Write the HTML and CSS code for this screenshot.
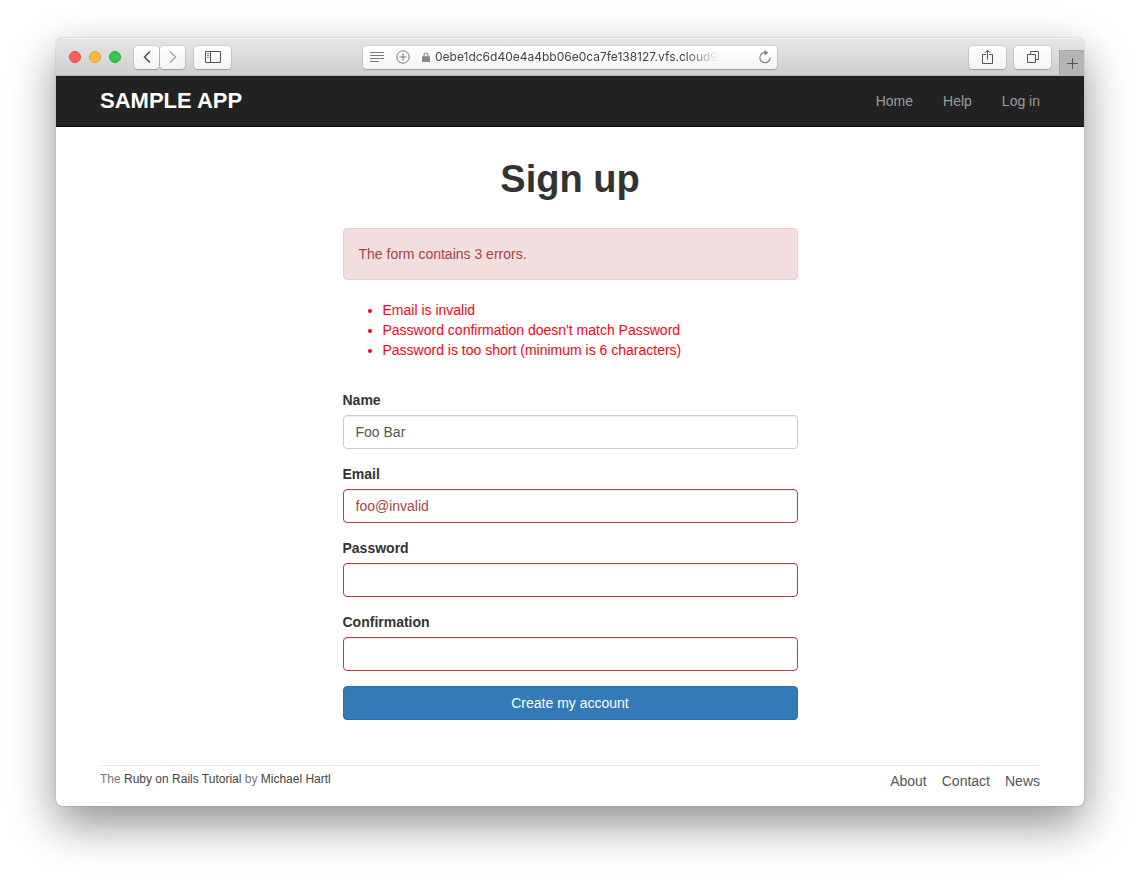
FILE: index.html
```html
<!DOCTYPE html>
<html lang="en">
<head>
<meta charset="utf-8">
<meta name="viewport" content="width=device-width, initial-scale=1">
<title>Sign up | Sample App</title>
<link rel="stylesheet" href="styles.css">
</head>
<body>
<div class="window">
  <div class="toolbar">
    <div class="toolbar-left">
      <div class="lights">
        <button class="light light-close" type="button" aria-label="Close"></button>
        <button class="light light-min" type="button" aria-label="Minimize"></button>
        <button class="light light-zoom" type="button" aria-label="Zoom"></button>
      </div>
      <div class="history">
        <button class="tool tool-small" type="button" aria-label="Back">
          <svg width="10" height="14" viewBox="0 0 10 14"><path d="M8 1.5 2.5 7 8 12.5" fill="none" stroke="#4a4a4a" stroke-width="1.5"/></svg>
        </button>
        <button class="tool tool-small" type="button" aria-label="Forward">
          <svg width="10" height="14" viewBox="0 0 10 14"><path d="M2 1.5 7.5 7 2 12.5" fill="none" stroke="#a9a9a9" stroke-width="1.5"/></svg>
        </button>
      </div>
      <button class="tool" type="button" aria-label="Show sidebar">
        <svg width="16" height="12" viewBox="0 0 16 12"><path d="M.5.5h15v11H.5zM5.500.5v11" fill="none" stroke="#555"/><path d="M2 2.500h2M2 4.500h2M2 6.500h2" stroke="#888"/></svg>
      </button>
    </div>
    <div class="address">
      <svg width="14" height="10" viewBox="0 0 14 10"><path d="M0 .5h14M0 3.500h14M0 6.500h14M0 9.500h9" stroke="#7a7a7a"/></svg>
      <svg width="14" height="14" viewBox="0 0 14 14"><g fill="none" stroke="#777"><circle cx="7" cy="7" r="6.200"/><path d="M7 3.500v7M3.500 7h7"/></g></svg>
      <div class="location">
        <svg width="8" height="10" viewBox="0 0 8 10"><path d="M2 5V3a2 2 0 0 1 4 0v2" fill="none" stroke="#888" stroke-width="1.200"/><rect y="4.300" width="8" height="5.700" rx=".8" fill="#888"/></svg>
        <span class="url">0ebe1dc6d40e4a4bb06e0ca7fe138127.vfs.cloud9</span>
      </div>
      <button class="reload" type="button" aria-label="Reload">
        <svg width="14" height="14" viewBox="0 0 14 14"><path d="M8 2.600A5.100 5.100 0 1 0 12.100 7.500" fill="none" stroke="#777" stroke-width="1.100"/><path d="M6.500 0 10.200 2.800 6.500 5.400z" fill="#777"/></svg>
      </button>
    </div>
    <div class="toolbar-right">
      <button class="tool" type="button" aria-label="Share">
        <svg width="12" height="16" viewBox="0 0 12 16"><path d="M4 5.500H.5v9h10v-9H7M5.500 10.500V1.200M2.800 3.900l2.700-2.700 2.700 2.700" fill="none" stroke="#555"/></svg>
      </button>
      <button class="tool" type="button" aria-label="Show all tabs">
        <svg width="12" height="12" viewBox="0 0 12 12"><path d="M.5 3.500h8v8h-8zM3.500 3.500v-3h8v8h-3" fill="none" stroke="#555"/></svg>
      </button>
      <button class="new-tab" type="button" aria-label="New tab">
        <svg width="11" height="11" viewBox="0 0 11 11"><path d="M5.500 0v11M0 5.500h11" stroke="#555"/></svg>
      </button>
    </div>
  </div>

  <header class="navbar">
    <div class="container navbar-row">
      <a class="logo" href="#">SAMPLE APP</a>
      <nav class="nav-links">
        <a href="#">Home</a>
        <a href="#">Help</a>
        <a href="#">Log in</a>
      </nav>
    </div>
  </header>

  <main class="container">
    <h1 class="title">Sign up</h1>
    <form class="signup">
      <div class="alert" role="alert">The form contains 3 errors.</div>
      <ul class="errors">
        <li>Email is invalid</li>
        <li>Password confirmation doesn't match Password</li>
        <li>Password is too short (minimum is 6 characters)</li>
      </ul>
      <div class="field">
        <label for="name">Name</label>
        <input id="name" type="text" value="Foo Bar">
      </div>
      <div class="field field-error">
        <label for="email">Email</label>
        <input id="email" type="email" value="foo@invalid">
      </div>
      <div class="field field-error">
        <label for="password">Password</label>
        <input id="password" type="password">
      </div>
      <div class="field field-error">
        <label for="confirmation">Confirmation</label>
        <input id="confirmation" type="password">
      </div>
      <button class="submit" type="submit">Create my account</button>
    </form>
    <footer class="footer">
      <small>The <a href="#">Ruby on Rails Tutorial</a> by <a href="#">Michael Hartl</a></small>
      <nav class="footer-links">
        <a href="#">About</a>
        <a href="#">Contact</a>
        <a href="#">News</a>
      </nav>
    </footer>
  </main>
</div>
</body>
</html>
```
FILE: styles.css
```css
* {
  box-sizing: border-box;
}

body {
  margin: 0;
  padding: 38px 56px 72px;
  background: #fff;
  color: #333;
  font: 14px/20px "Liberation Sans", Arial, sans-serif;
}

a {
  text-decoration: none;
}

button,
input {
  font: inherit;
}

svg {
  display: block;
  flex: none;
}

.window {
  overflow: hidden;
  border-radius: 6px;
  background: #fff;
  box-shadow: 0 0 1px rgba(0, 0, 0, 0.6), 0 18px 46px rgba(0, 0, 0, 0.44);
}

.toolbar {
  display: grid;
  grid-template-columns: 1fr minmax(0, 414px) 1fr;
  align-items: center;
  height: 38px;
  border-top: 1px solid #f2f2f2;
  border-bottom: 1px solid #b4b4b4;
  background: linear-gradient(#e6e6e6, #cfcfcf);
}

.toolbar-left,
.toolbar-right,
.lights,
.history,
.location {
  display: flex;
  align-items: center;
}

.toolbar-left {
  gap: 9px;
  padding-left: 13px;
}

.lights {
  gap: 8px;
  margin-right: 4px;
}

.light {
  width: 12px;
  height: 12px;
  padding: 0;
  border: 1px solid;
  border-radius: 50%;
}

.light-close {
  border-color: #e2453f;
  background: #fc605c;
}

.light-min {
  border-color: #e0a033;
  background: #fdbc40;
}

.light-zoom {
  border-color: #27a833;
  background: #34c84a;
}

.history {
  gap: 1px;
}

.tool {
  display: flex;
  align-items: center;
  justify-content: center;
  width: 37px;
  height: 23px;
  padding: 0;
  border: 0;
  border-radius: 4px;
  background: linear-gradient(#fff, #f3f3f3);
  box-shadow: 0 0 0 1px rgba(0, 0, 0, 0.08), 0 1px 1px rgba(0, 0, 0, 0.2);
}

.tool-small {
  width: 25px;
}

.address {
  display: flex;
  align-items: center;
  gap: 12px;
  height: 23px;
  padding: 0 5px 0 7px;
  border-radius: 4px;
  background: linear-gradient(#fff, #f5f5f5);
  box-shadow: 0 0 0 1px rgba(0, 0, 0, 0.08), 0 1px 1px rgba(0, 0, 0, 0.2);
}

.location {
  flex: 1;
  gap: 5px;
  min-width: 0;
}

.url {
  flex: 0 1 282px;
  overflow: hidden;
  color: #444;
  font: 12px/16px Inter, sans-serif;
  white-space: nowrap;
  -webkit-mask-image: linear-gradient(to right, #000 250px, transparent 284px);
  mask-image: linear-gradient(to right, #000 250px, transparent 284px);
}

.reload {
  padding: 0;
  border: 0;
  background: none;
}

.toolbar-right {
  align-self: stretch;
  justify-content: flex-end;
  gap: 8px;
}

.new-tab {
  display: flex;
  align-items: center;
  justify-content: center;
  align-self: flex-end;
  width: 25px;
  height: 25px;
  padding: 0;
  border: 1px solid #a6a6a6;
  border-width: 1px 0 0 1px;
  background: #b5b5b5;
}

.navbar {
  border-bottom: 1px solid #080808;
  background: #222;
}

.container {
  max-width: 970px;
  margin: 0 auto;
  padding: 0 15px;
}

.navbar-row {
  display: flex;
  align-items: center;
  justify-content: space-between;
  height: 50px;
}

.logo {
  color: #fff;
  font-size: 22px;
  font-weight: bold;
  line-height: 22px;
}

.nav-links {
  display: flex;
  gap: 30px;
}

.nav-links a {
  color: #9d9d9d;
}

.title {
  margin: 31px 0 28px;
  font-size: 38px;
  font-weight: bold;
  line-height: 42px;
  text-align: center;
}

.signup {
  max-width: 455px;
  margin: 0 auto 45px;
}

.alert {
  padding: 15px;
  border: 1px solid #ebccd1;
  border-radius: 4px;
  background: #f2dede;
  color: #a94442;
}

.errors {
  margin: 20px 0 30px;
  padding-left: 40px;
  color: #ff0014;
}

.field {
  margin-bottom: 15px;
}

.field label {
  display: block;
  margin-bottom: 5px;
  font-weight: bold;
}

.field input {
  display: block;
  width: 100%;
  height: 34px;
  padding: 6px 12px;
  border: 1px solid #ccc;
  border-radius: 4px;
  background: #fff;
  box-shadow: inset 0 1px 1px rgba(0, 0, 0, 0.08);
  color: #555;
}

.field-error input {
  border-color: #a94442;
  color: #a94442;
}

.submit {
  display: block;
  width: 100%;
  height: 34px;
  border: 1px solid #2e6da4;
  border-radius: 4px;
  background: #337ab7;
  color: #fff;
}

.footer {
  display: flex;
  justify-content: space-between;
  padding: 5px 0 15px;
  border-top: 1px solid #eaeaea;
  color: #777;
}

.footer small {
  font-size: 12px;
  line-height: 16px;
}

.footer a {
  color: #555;
}

.footer small a {
  color: #444;
}

.footer-links {
  display: flex;
  gap: 15px;
}
```
